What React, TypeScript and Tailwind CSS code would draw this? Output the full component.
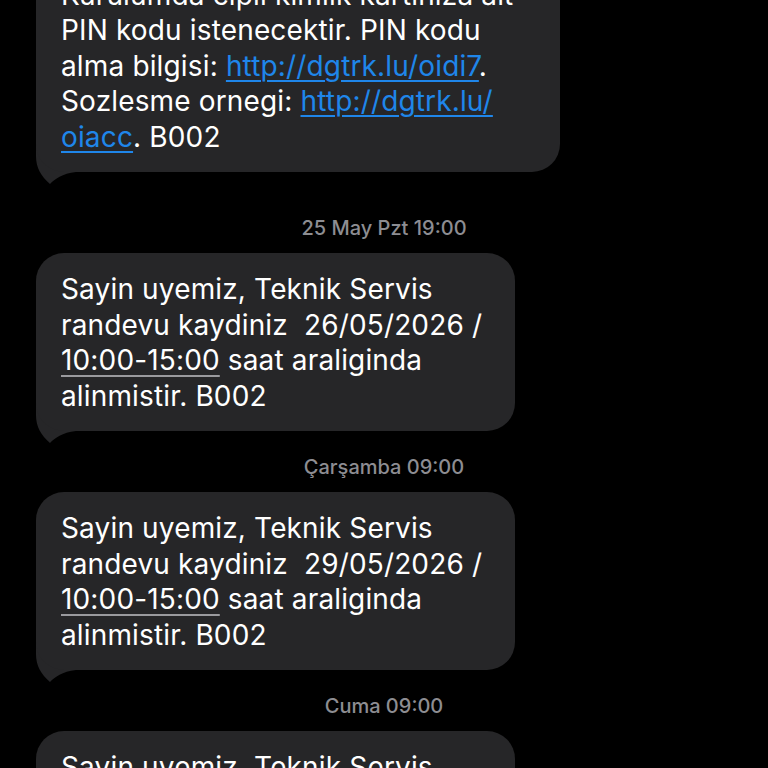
import React from "react";

const font = { fontFamily: "Inter, 'Noto Sans', 'Liberation Sans', sans-serif" };

function Tail() {
  return (
    <svg
      className="absolute left-0 bottom-[-12px]"
      width="40"
      height="42"
      viewBox="0 0 40 42"
    >
      <path
        d="M0 0 L0 14 C0 26 5 34 14 42 C19 37 26 31.5 40 30 L40 0 Z"
        fill="#262628"
      />
    </svg>
  );
}

function Bubble({ w, children }: { w: string; children: React.ReactNode }) {
  return (
    <div className={`relative ml-[36px] ${w}`}>
      <div className="relative z-10 rounded-[28px] bg-[#262628] pl-[25px] pr-4 pt-[19px] pb-[17px] text-[28px] leading-[35.5px] text-white whitespace-nowrap tracking-[0.15px]">
        {children}
      </div>
      <Tail />
    </div>
  );
}

function Stamp({ children, mt }: { children: React.ReactNode; mt: string }) {
  return (
    <div
      className={`${mt} mb-[13px] text-center text-[20px] leading-[24px] font-medium text-[#8d8d92]`}
    >
      {children}
    </div>
  );
}

const Link = ({ children }: { children: React.ReactNode }) => (
  <span className="text-[#1f86ea] underline decoration-[#1f86ea] decoration-[2px] underline-offset-[4px]">
    {children}
  </span>
);

const Time = ({ children }: { children: React.ReactNode }) => (
  <span className="underline decoration-[#9a9a9e] decoration-[2px] underline-offset-[5px]">
    {children}
  </span>
);

export default function App() {
  return (
    <div className="w-[768px] h-[768px] overflow-hidden bg-black" style={font}>
      <div className="flex flex-col mt-[-41.5px]">
        <Bubble w="w-[524px]">
          Kurulumda cipli kimlik kartiniza ait
          <br />
          PIN kodu istenecektir. PIN kodu
          <br />
          alma bilgisi: <Link>http://dgtrk.lu/oidi7</Link>.
          <br />
          Sozlesme ornegi: <Link>http://dgtrk.lu/</Link>
          <br />
          <Link>oiacc</Link>. B002
        </Bubble>

        <Stamp mt="mt-[44px]">25 May Pzt 19:00</Stamp>

        <Bubble w="w-[479px]">
          Sayin uyemiz, Teknik Servis
          <br />
          randevu kaydiniz&nbsp; 26/05/2026 /
          <br />
          <Time>10:00-15:00</Time> saat araliginda
          <br />
          alinmistir. B002
        </Bubble>

        <Stamp mt="mt-[24px]">Çarşamba 09:00</Stamp>

        <Bubble w="w-[479px]">
          Sayin uyemiz, Teknik Servis
          <br />
          randevu kaydiniz&nbsp; 29/05/2026 /
          <br />
          <Time>10:00-15:00</Time> saat araliginda
          <br />
          alinmistir. B002
        </Bubble>

        <Stamp mt="mt-[24px]">Cuma 09:00</Stamp>

        <Bubble w="w-[479px]">
          Sayin uyemiz, Teknik Servis
          <br />
          randevu kaydiniz&nbsp; 01/06/2026 /
          <br />
          <Time>10:00-15:00</Time> saat araliginda
          <br />
          alinmistir. B002
        </Bubble>
      </div>
    </div>
  );
}
